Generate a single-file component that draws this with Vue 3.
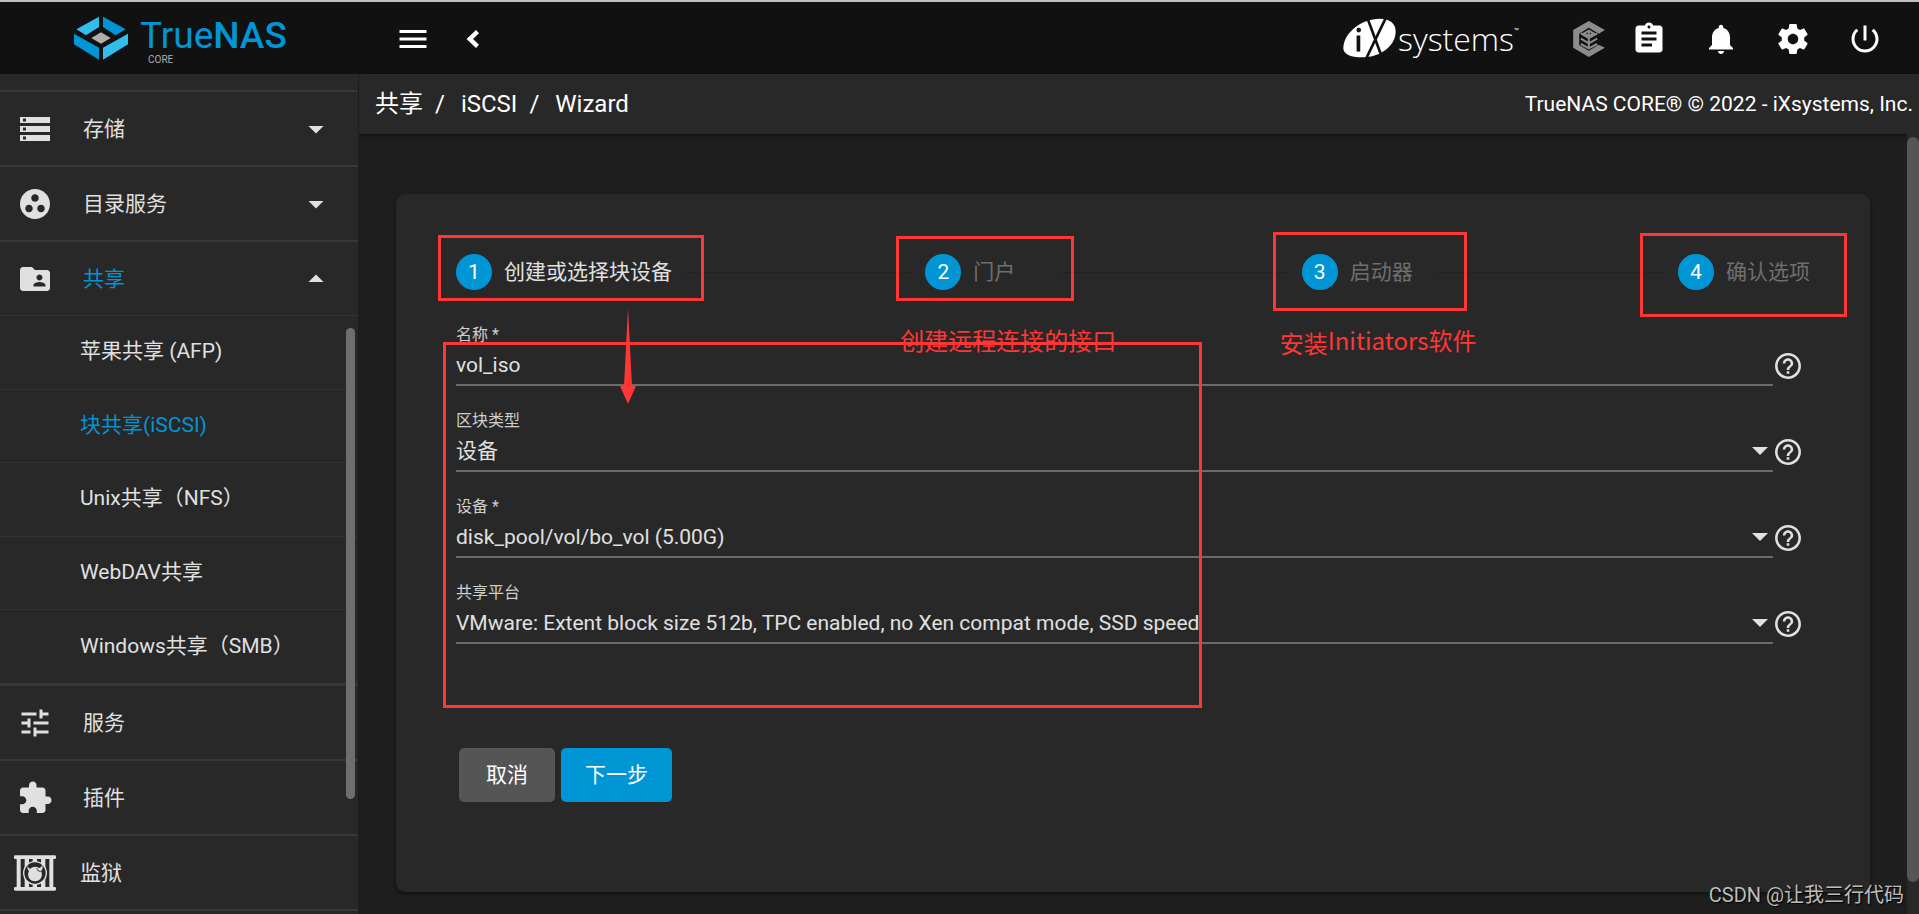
<script setup>
import { ref } from 'vue'

const paths = {
  storage: 'M2 20h20v-4H2v4zm2-3h2v2H4v-2zM2 4v4h20V4H2zm4 3H4V5h2v2zm-4 7h20v-4H2v4zm2-3h2v2H4v-2z',
  directory: 'M12 2C6.48 2 2 6.48 2 12s4.48 10 10 10 10-4.48 10-10S17.52 2 12 2zM8 17.5c-1.38 0-2.5-1.12-2.5-2.5s1.12-2.5 2.5-2.5 2.5 1.12 2.5 2.5-1.12 2.5-2.5 2.5zM9.5 8c0-1.38 1.12-2.5 2.5-2.5s2.5 1.12 2.5 2.5-1.12 2.5-2.5 2.5S9.5 9.38 9.5 8zm6.5 9.5c-1.38 0-2.5-1.12-2.5-2.5s1.12-2.5 2.5-2.5 2.5 1.12 2.5 2.5-1.12 2.5-2.5 2.5z',
  share: 'M20 6h-8l-2-2H4c-1.1 0-1.99.9-1.99 2L2 18c0 1.1.9 2 2 2h16c1.1 0 2-.9 2-2V8c0-1.1-.9-2-2-2zm-5 3c1.1 0 2 .9 2 2s-.9 2-2 2-2-.9-2-2 .9-2 2-2zm4 8h-8v-1c0-1.33 2.67-2 4-2s4 .67 4 2v1z',
  tune: 'M3 17v2h6v-2H3zM3 5v2h10V5H3zm10 16v-2h8v-2h-8v-2h-2v6h2zM7 9v2H3v2h4v2h2V9H7zm14 4v-2H11v2h10zm-6-4h2V7h4V5h-4V3h-2v6z',
  plugin: 'M20.5 11H19V7c0-1.1-.9-2-2-2h-4V3.5C13 2.12 11.88 1 10.5 1S8 2.12 8 3.5V5H4c-1.1 0-1.99.9-1.99 2v3.8H3.5c1.49 0 2.7 1.21 2.7 2.7s-1.21 2.7-2.7 2.7H2V20c0 1.1.9 2 2 2h3.8v-1.5c0-1.49 1.21-2.7 2.7-2.7 1.49 0 2.7 1.21 2.7 2.7V22H17c1.1 0 2-.9 2-2v-4h1.5c1.38 0 2.5-1.12 2.5-2.5S21.88 11 20.5 11z',
  clipboard: 'M19 3h-4.18C14.4 1.84 13.3 1 12 1c-1.3 0-2.4.84-2.82 2H5c-1.1 0-2 .9-2 2v14c0 1.1.9 2 2 2h14c1.1 0 2-.9 2-2V5c0-1.1-.9-2-2-2zm-7 0c.55 0 1 .45 1 1s-.45 1-1 1-1-.45-1-1 .45-1 1-1zm2 14H7v-2h7v2zm3-4H7v-2h10v2zm0-4H7V7h10v2z',
  bell: 'M12 22c1.1 0 2-.9 2-2h-4c0 1.1.89 2 2 2zm6-6v-5c0-3.07-1.64-5.64-4.5-6.32V4c0-.83-.67-1.5-1.5-1.5s-1.5.67-1.5 1.5v.68C7.63 5.36 6 7.92 6 11v5l-2 2v1h16v-1l-2-2z',
  gear: 'M19.43 12.98c.04-.32.07-.64.07-.98s-.03-.66-.07-.98l2.11-1.65c.19-.15.24-.42.12-.64l-2-3.46c-.12-.22-.39-.3-.61-.22l-2.49 1c-.52-.4-1.08-.73-1.69-.98l-.38-2.65C14.46 2.18 14.25 2 14 2h-4c-.25 0-.46.18-.49.42l-.38 2.65c-.61.25-1.17.59-1.69.98l-2.49-1c-.23-.09-.49 0-.61.22l-2 3.46c-.13.22-.07.49.12.64l2.11 1.65c-.04.32-.07.65-.07.98s.03.66.07.98l-2.11 1.65c-.19.15-.24.42-.12.64l2 3.46c.12.22.39.3.61.22l2.49-1c.52.4 1.08.73 1.69.98l.38 2.65c.03.24.24.42.49.42h4c.25 0 .46-.18.49-.42l.38-2.65c.61-.25 1.17-.59 1.69-.98l2.49 1c.23.09.49 0 .61-.22l2-3.46c.12-.22.07-.49-.12-.64l-2.11-1.65zM12 15.5c-1.93 0-3.5-1.57-3.5-3.5s1.57-3.5 3.5-3.5 3.5 1.57 3.5 3.5-1.57 3.5-3.5 3.5z',
  power: 'M13 3h-2v10h2V3zm4.83 2.17l-1.42 1.42C17.99 7.86 19 9.81 19 12c0 3.87-3.13 7-7 7s-7-3.13-7-7c0-2.19 1.01-4.14 2.58-5.42L6.17 5.17C4.23 6.82 3 9.26 3 12c0 4.97 4.03 9 9 9s9-4.03 9-9c0-2.74-1.23-5.18-3.17-6.83z',
}

const upperNav = [
  { label: '存储', icon: 'storage', open: false },
  { label: '目录服务', icon: 'directory', open: false },
  { label: '共享', icon: 'share', open: true },
]
const shares = ['苹果共享 (AFP)', '块共享(iSCSI)', 'Unix共享（NFS）', 'WebDAV共享', 'Windows共享（SMB）']
const lowerNav = [
  { label: '服务', icon: 'tune' },
  { label: '插件', icon: 'plugin' },
]
const tools = [
  { name: '任务', icon: 'clipboard' },
  { name: '通知', icon: 'bell' },
  { name: '设置', icon: 'gear' },
  { name: '电源', icon: 'power' },
]
const steps = ['创建或选择块设备', '门户', '启动器', '确认选项']
const name = ref('vol_iso')
const selects = [
  { id: 'extent-type', label: '区块类型', value: '设备' },
  { id: 'device', label: '设备 *', value: 'disk_pool/vol/bo_vol (5.00G)' },
  { id: 'platform', label: '共享平台', value: 'VMware: Extent block size 512b, TPC enabled, no Xen compat mode, SSD speed' },
]
</script>

<template>
  <div class="app">
    <header class="topbar">
      <a class="brand" href="#" aria-label="TrueNAS CORE">
        <svg class="mark" viewBox="222 48 162 132" aria-hidden="true">
          <path fill="#31beec" d="M297 50v31l-39 25-29-18zM384 101v32l-75 46v-36z" />
          <path fill="#0095d5" d="M309 50l68 38-30 18-38-25zM222 101l75 42v36l-75-46z" />
          <path fill="#aeaeae" d="M303 97l29 17-29 17-29-17z" />
        </svg>
        <span class="brand-text">
          <span class="brand-name">True<b>NAS</b></span>
          <span class="brand-sub">CORE</span>
        </span>
      </a>
      <div class="left-tools">
        <button class="icon-btn" aria-label="菜单">
          <svg class="icon" viewBox="0 0 24 24"><path d="M3 18h18v-2H3v2zm0-5h18v-2H3v2zm0-7v2h18V6H3z" /></svg>
        </button>
        <button class="icon-btn" aria-label="收起">
          <svg class="icon" viewBox="0 0 24 24"><path d="M16 8.2L14 6l-6.3 6L14 18l2-2.200L12 12z" /></svg>
        </button>
      </div>
      <a class="ix" href="#" aria-label="iXsystems">
        <svg class="ix-mark" viewBox="17 23 158 119" aria-hidden="true">
          <path fill="#fff" d="M18 112C18 68 72 25 126 25c30 0 48 14 48 38 0 42-44 77-100 77-36 0-56-10-56-28z" />
          <g stroke="#111" fill="none">
            <path stroke-width="11" d="M63 75v48" />
            <path stroke-width="8" d="M90 24l44 118" />
            <path stroke-width="8" d="M145 22L86 144" />
          </g>
          <circle cx="64" cy="59" r="7" fill="#111" />
        </svg>
        <span class="ix-text">systems</span><span class="tm">™</span>
      </a>
      <a class="tc" href="#" aria-label="TrueCommand">
        <svg viewBox="705 33 95 108" aria-hidden="true">
          <path fill="#8c8c8c" d="M752 33l48 27-18 11-30-18-29 18v34l29 17 30-18 18 9-48 28-47-28V60z" />
          <path fill="none" stroke="#8c8c8c" stroke-width="6" d="M752 66v52M728 70l24 14 25-14M728 86l24 14 25-14M728 102l24 13 25-13M738 70l14-8 14 8-14 8z" />
        </svg>
      </a>
      <div class="right-tools">
        <button v-for="t in tools" :key="t.name" class="icon-btn wide" :aria-label="t.name">
          <svg class="icon" viewBox="0 0 24 24"><path :d="paths[t.icon]" /></svg>
        </button>
      </div>
    </header>

    <div class="body">
      <nav class="sidebar">
        <div class="side-scroll">
          <a v-for="n in upperNav" :key="n.label" href="#" class="nav-row" :class="{ active: n.open }">
            <svg class="icon" viewBox="0 0 24 24"><path :d="paths[n.icon]" /></svg>
            <span class="nav-label">{{ n.label }}</span>
            <svg class="icon" viewBox="0 0 24 24"><path :d="n.open ? 'M7 14l5-5 5 5z' : 'M7 10l5 5 5-5z'" /></svg>
          </a>
          <div class="subnav">
            <a v-for="(s, i) in shares" :key="s" href="#" class="sub-row" :class="{ active: i === 1 }">{{ s }}</a>
          </div>
          <a v-for="n in lowerNav" :key="n.label" href="#" class="nav-row">
            <svg class="icon" viewBox="0 0 24 24"><path :d="paths[n.icon]" /></svg>
            <span class="nav-label">{{ n.label }}</span>
          </a>
          <a href="#" class="nav-row jail">
            <svg class="jail-icon" viewBox="42 556 126 106" aria-hidden="true">
              <g fill="#e0e0e0">
                <path d="M50 562h12v94H50zM148 562h12v94h-12zM74 562h13v94H74zM98 562h13v94H98zM123 562h13v94h-13z" />
                <rect x="42" y="556" width="126" height="11" rx="4" />
                <rect x="42" y="651" width="126" height="11" rx="4" />
              </g>
              <circle cx="105" cy="609" r="34" fill="#282828" stroke="#e0e0e0" stroke-width="4" />
              <path fill="#e0e0e0" d="M84 587c0 6 3 9 7 9 8-7 18-8 26-2 6-2 9-5 9-10 4 7 2 14-3 19 8 17-3 31-18 31s-26-15-18-31c-5-5-6-10-3-16z" />
              <path stroke="#282828" stroke-width="3" fill="none" d="M111 595c1 7 5 9 11 9" />
            </svg>
            <span class="nav-label">监狱</span>
          </a>
          <div class="nav-row"></div>
        </div>
        <div class="side-thumb"></div>
      </nav>

      <main class="main">
        <div class="crumbs">
          <div class="trail">
            <a href="#">共享</a><span>/</span><a href="#">iSCSI</a><span>/</span><a href="#">Wizard</a>
          </div>
          <div class="copyright">TrueNAS CORE® © 2022 - iXsystems, Inc.</div>
        </div>
        <div class="page">
          <div class="page-inner">
            <section class="card">
              <div class="stepper">
                <template v-for="(s, i) in steps" :key="s">
                  <div v-if="i" class="line"></div>
                  <div class="step-wrap">
                    <button class="step" :class="{ current: i === 0 }">
                      <span class="num">{{ i + 1 }}</span><span class="step-label">{{ s }}</span>
                    </button>
                    <div class="box" :class="'box' + (i + 1)"></div>
                    <div v-if="i === 1" class="note note2">创建远程连接的接口</div>
                    <div v-if="i === 2" class="note note3"><span class="low">安装</span><span>Initiators软件</span></div>
                  </div>
                </template>
              </div>

              <form class="form" @submit.prevent>
                <div class="field">
                  <div class="control">
                    <label for="extent-name">名称 *</label>
                    <input id="extent-name" v-model="name" type="text" />
                  </div>
                  <button type="button" class="help" aria-label="帮助">
                    <svg viewBox="2 2 20 20"><path d="M11 18h2v-2h-2v2zm1-16C6.480 2 2 6.480 2 12s4.480 10 10 10 10-4.480 10-10S17.520 2 12 2zm0 18c-4.410 0-8-3.590-8-8s3.590-8 8-8 8 3.590 8 8-3.590 8-8 8zm0-14c-2.210 0-4 1.790-4 4h2c0-1.100.9-2 2-2s2 .9 2 2c0 2-3 1.750-3 5h2c0-2.250 3-2.500 3-5 0-2.210-1.790-4-4-4z" /></svg>
                  </button>
                </div>
                <div v-for="f in selects" :key="f.id" class="field">
                  <div class="control">
                    <label :for="f.id">{{ f.label }}</label>
                    <select :id="f.id"><option>{{ f.value }}</option></select>
                    <svg class="caret" viewBox="0 0 16 8" aria-hidden="true"><path d="M0 0h16L8 8z" /></svg>
                  </div>
                  <button type="button" class="help" aria-label="帮助">
                    <svg viewBox="2 2 20 20"><path d="M11 18h2v-2h-2v2zm1-16C6.480 2 2 6.480 2 12s4.480 10 10 10 10-4.480 10-10S17.520 2 12 2zm0 18c-4.410 0-8-3.590-8-8s3.590-8 8-8 8 3.590 8 8-3.590 8-8 8zm0-14c-2.210 0-4 1.790-4 4h2c0-1.100.9-2 2-2s2 .9 2 2c0 2-3 1.750-3 5h2c0-2.250 3-2.500 3-5 0-2.210-1.790-4-4-4z" /></svg>
                  </button>
                </div>
                <div class="actions">
                  <button type="button" class="btn">取消</button>
                  <button type="submit" class="btn primary">下一步</button>
                </div>
              </form>

              <div class="box form-box"></div>
              <svg class="arrow" viewBox="0 0 16 96" aria-hidden="true"><path d="M8 0l4 78h4L8 96 0 78h4z" /></svg>
            </section>
          </div>
          <div class="page-track"><div class="page-thumb"></div></div>
        </div>
      </main>
    </div>
    <div class="watermark">CSDN @让我三行代码</div>
  </div>
</template>

<style>
body {
  background: #1e1e1e;
}
</style>

<style scoped>
* {
  box-sizing: border-box;
}
.app {
  position: relative;
  display: flex;
  flex-direction: column;
  height: 100vh;
  overflow: hidden;
  background: #1e1e1e;
  color: #e0e0e0;
  font-family: Roboto, "Noto Sans CJK SC", sans-serif;
  font-size: 21px;
  line-height: 24px;
}
a {
  color: inherit;
  text-decoration: none;
}
button,
input,
select {
  font: inherit;
  color: inherit;
  background: none;
  border: 0;
  margin: 0;
  padding: 0;
}
.icon {
  display: block;
  flex: none;
  width: 36px;
  height: 36px;
  fill: currentColor;
}

.topbar {
  display: flex;
  align-items: center;
  flex: none;
  height: 74px;
  padding-top: 2px;
  border-top: 2px solid #c0c0c0;
  background: #111;
  color: #fff;
}
.brand {
  display: flex;
  align-items: flex-start;
  gap: 12px;
  width: 359px;
  padding-left: 74px;
}
.mark {
  width: 54px;
  height: 44px;
  margin-top: 3px;
}
.brand-text {
  display: flex;
  flex-direction: column;
  padding-top: 4px;
}
.brand-name {
  color: #0095d5;
  font-family: Roboto, sans-serif;
  font-size: 37px;
  font-weight: 400;
  line-height: 37px;
}
.brand-name b {
  font-weight: 500;
}
.brand-sub {
  padding-left: 8px;
  color: #aeaeae;
  font-size: 10px;
  line-height: 12px;
}
.left-tools {
  display: flex;
  gap: 24px;
  padding-left: 36px;
}
.right-tools {
  display: flex;
  padding-right: 18px;
}
.icon-btn {
  display: flex;
  justify-content: center;
  width: 36px;
}
.icon-btn.wide {
  width: 72px;
}
.ix {
  display: flex;
  align-items: center;
  margin-left: auto;
  color: #fff;
}
.ix-mark {
  width: 53px;
  height: 40px;
  margin-bottom: 2px;
}
.ix-text {
  padding-left: 2px;
  font-family: "Open Sans", sans-serif;
  font-size: 32px;
  font-weight: 300;
  line-height: 40px;
}
.tm {
  align-self: flex-start;
  font-size: 8px;
  line-height: 28px;
}
.tc {
  display: flex;
  margin-left: 54px;
  margin-right: 8px;
}
.tc svg {
  width: 32px;
  height: 36px;
}

.body {
  display: flex;
  flex: 1;
  min-height: 0;
}
.sidebar {
  position: relative;
  flex: none;
  width: 359px;
  background: #282828;
  border-right: 1px solid #1c1c1c;
}
.side-scroll {
  height: 100%;
  padding-top: 16px;
  overflow: hidden;
}
.nav-row {
  display: flex;
  align-items: center;
  height: 75px;
  padding: 0 24px 0 17px;
  border-top: 2px solid #373737;
}
.nav-label {
  flex: 1;
  padding-left: 30px;
  color: #e0e0e0;
}
.active .nav-label,
.sub-row.active {
  color: #0095d5;
}
.subnav {
  display: grid;
  grid-template-rows: repeat(5, 1fr);
  height: 369px;
  border-bottom: 1px solid #373737;
}
.sub-row {
  display: flex;
  align-items: center;
  padding: 0 0 2px 80px;
  border-top: 1px solid #333;
}
.nav-row.jail {
  padding-left: 14px;
}
.jail-icon {
  width: 42px;
  height: 36px;
}
.jail .nav-label {
  padding-left: 24px;
}
.side-thumb {
  position: absolute;
  top: 254px;
  right: 3px;
  width: 9px;
  height: 471px;
  border-radius: 5px;
  background: #6e6e6e;
}

.main {
  display: flex;
  flex: 1;
  flex-direction: column;
  min-width: 0;
}
.crumbs {
  display: flex;
  align-items: center;
  justify-content: space-between;
  flex: none;
  height: 60px;
  padding: 0 6px 0 16px;
  background: #282828;
  color: #fff;
  box-shadow: 0 1px 4px #0008;
}
.trail {
  display: flex;
  font-size: 24px;
}
.trail a + span {
  padding: 0 16px 0 12px;
}
.page {
  display: flex;
  flex: 1;
  min-height: 0;
}
.page-inner {
  flex: 1;
  min-width: 0;
  padding: 60px 37px 0;
}
.page-track {
  width: 12px;
  padding-top: 3px;
  background: #282828;
}
.page-thumb {
  height: calc(100% - 32px);
  border-radius: 6px;
  background: #555;
}
.card {
  position: relative;
  padding: 60px 60px 90px;
  border-radius: 9px;
  background: #282828;
  box-shadow: 0 2px 4px #0007;
}
.stepper {
  display: flex;
  align-items: center;
  margin-bottom: 33px;
}
.step-wrap {
  position: relative;
}
.step {
  display: flex;
  align-items: center;
  gap: 12px;
  height: 36px;
  color: #6f6f6f;
}
.step.current {
  color: #e0e0e0;
}
.num {
  width: 36px;
  height: 36px;
  border-radius: 50%;
  background: #0095d5;
  color: #fff;
  line-height: 36px;
}
.step-label {
  min-width: 75px;
  text-align: left;
}
.line {
  flex: 1;
  margin: 0 12px;
  border-top: 1px solid #212121;
}
.box {
  position: absolute;
  border: 3px solid #ff3636;
  pointer-events: none;
}
.box1 {
  top: -19px;
  left: -18px;
  width: 266px;
  height: 66px;
}
.box2 {
  top: -18px;
  left: -29px;
  width: 178px;
  height: 65px;
}
.box3 {
  top: -22px;
  left: -29px;
  width: 194px;
  height: 79px;
}
.box4 {
  top: -21px;
  left: -38px;
  width: 207px;
  height: 84px;
}
.form-box {
  top: 148px;
  left: 47px;
  width: 759px;
  height: 366px;
}
.note {
  position: absolute;
  display: flex;
  color: #ff3636;
  font-family: "Noto Sans CJK SC", sans-serif;
  font-size: 24px;
  line-height: 30px;
  white-space: nowrap;
}
.note2 {
  top: 71px;
  left: -25px;
}
.note3 {
  top: 71px;
  left: -22px;
}
.low {
  padding-top: 3px;
}
.arrow {
  position: absolute;
  top: 114px;
  left: 224px;
  width: 16px;
  height: 96px;
  fill: #ff3636;
}

.form {
  padding-right: 9px;
}
.field {
  display: flex;
  margin-bottom: 23px;
}
.control {
  position: relative;
  display: flex;
  flex: 1;
  flex-direction: column;
  min-width: 0;
}
.control label {
  font-size: 16px;
  line-height: 24px;
  color: #cfcfcf;
}
.control input,
.control select {
  width: 100%;
  height: 39px;
  padding-bottom: 2px;
  appearance: none;
  border-bottom: 2px solid #6b6b6b;
  border-radius: 0;
  outline: none;
}
.caret {
  position: absolute;
  right: 5px;
  bottom: 17px;
  width: 16px;
  height: 8px;
  fill: #e0e0e0;
  pointer-events: none;
}
.help {
  align-self: flex-end;
  width: 26px;
  margin: 0 0 7px 2px;
}
.help svg {
  display: block;
  width: 26px;
  height: 26px;
  fill: #e0e0e0;
}
.actions {
  display: flex;
  gap: 6px;
  margin: 104px 0 0 3px;
}
.btn {
  height: 54px;
  padding: 0 27px;
  border-radius: 5px;
  background: #555;
  color: #fff;
}
.btn.primary {
  padding: 0 24px;
  background: #0095d5;
}
.watermark {
  position: absolute;
  right: 15px;
  bottom: 4px;
  color: #bdbdbd;
  font-size: 20px;
  line-height: 30px;
  text-shadow: 1px 1px 1px #000;
}
</style>
